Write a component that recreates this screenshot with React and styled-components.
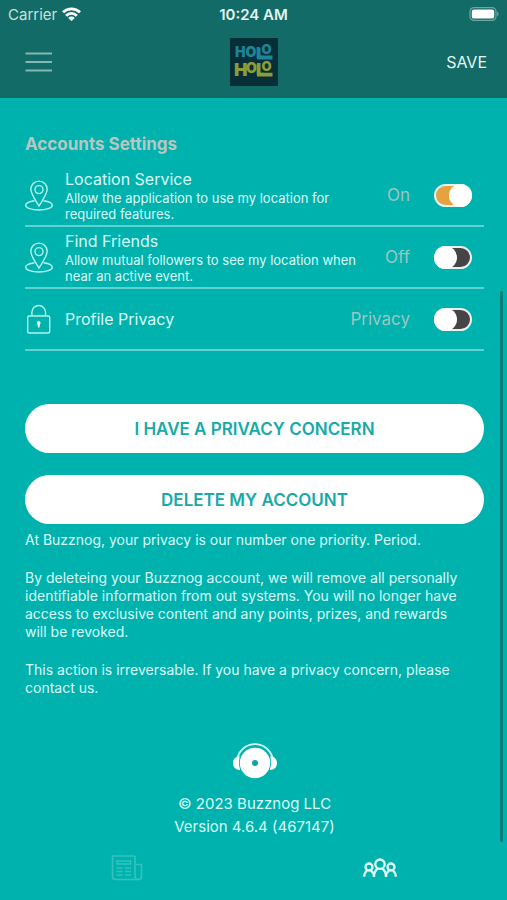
import React, { useState } from 'react'
import styled, { createGlobalStyle } from 'styled-components'

const GlobalStyle = createGlobalStyle`
  * {
    box-sizing: border-box;
  }
  body {
    margin: 0;
    background: #00b2ae;
    font-family: Inter, "Liberation Sans", sans-serif;
    color: #d9fbf8;
  }
  button {
    font-family: inherit;
    border: none;
    padding: 0;
    cursor: pointer;
  }
`

const Screen = styled.div`
  min-height: 100vh;
  display: flex;
  flex-direction: column;
`

const Header = styled.header`
  background: #136b67;
  color: #e0f2f1;
`

const StatusBar = styled.div`
  height: 28px;
  padding: 0 8px;
  display: grid;
  grid-template-columns: 1fr auto 1fr;
  align-items: center;
  font-size: 15px;
`

const Carrier = styled.div`
  display: flex;
  align-items: center;
  gap: 5px;
  color: #c9e0de;
`

const Clock = styled.time`
  font-weight: 600;
`

const BatteryLevel = styled.span`
  display: flex;
  justify-self: end;
`

const NavBar = styled.nav`
  height: 70px;
  padding: 0 20px 2px;
  display: grid;
  grid-template-columns: 1fr auto 1fr;
  align-items: center;
`

const NavButton = styled.button`
  display: flex;
  justify-self: ${(props) => props.$side};
  background: none;
  color: #e6f5f4;
  font-size: 16px;
  line-height: 20px;
`

const Logo = styled.svg`
  display: block;
  width: 48px;
  height: 48px;
  font-family: Inter, "Liberation Sans", sans-serif;
  font-weight: 900;
`

const Main = styled.main`
  position: relative;
  flex: 1;
  padding: 34px 23px 0 25px;
`

const ScrollThumb = styled.div`
  position: absolute;
  top: 26%;
  right: 4px;
  bottom: 0;
  width: 3px;
  border-radius: 2px;
  background: #067f7c;
`

const SectionTitle = styled.h2`
  margin: 0 0 9px;
  font-size: 17px;
  line-height: 24px;
  font-weight: 700;
  color: #b9c6c2;
`

const List = styled.ul`
  list-style: none;
  margin: 0;
  padding: 0;
`

const Row = styled.li`
  min-height: 62px;
  padding-right: 12px;
  display: flex;
  align-items: center;
  border-bottom: 2px solid #5fd2cf;

  > svg {
    flex: none;
    margin-right: 11px;
  }
`

const RowText = styled.label`
  flex: 1;
  display: block;
`

const RowTitle = styled.span`
  display: block;
  font-size: 16px;
  line-height: 22px;
`

const RowDescription = styled.span`
  display: block;
  font-size: 13px;
  line-height: 16px;
`

const RowState = styled.span`
  margin: 0 24px 0 16px;
  font-size: 17px;
  line-height: 22px;
  color: #9cc6c1;
`

const Switch = styled.input`
  appearance: none;
  flex: none;
  width: 38px;
  height: 23px;
  margin: 0;
  display: flex;
  align-items: stretch;
  border: 2px solid #e4f3f0;
  border-radius: 12px;
  background: #474448;
  cursor: pointer;

  &::before {
    content: '';
    width: 23px;
    margin: -2px;
    border-radius: 50%;
    background: #ffffff;
  }

  &:checked {
    justify-content: flex-end;
    background: #e6a23f;
  }
`

const Actions = styled.div`
  margin-top: 53px;
  display: grid;
  gap: 22px;
`

const ActionButton = styled.button`
  height: 49px;
  border-radius: 25px;
  background: #ffffff;
  color: #17aaa7;
  font-size: 17px;
  font-weight: 600;
`

const Notice = styled.div`
  margin-top: 7px;
  padding-right: 16px;
  display: grid;
  gap: 20px;
  font-size: 14px;
  line-height: 18px;

  p {
    margin: 0;
  }
`

const About = styled.footer`
  margin-top: 46px;
  display: flex;
  flex-direction: column;
  align-items: center;
  font-size: 15px;
  line-height: 23px;

  svg {
    margin-bottom: 13px;
  }
`

const TabBar = styled.nav`
  height: 58px;
  display: grid;
  grid-template-columns: 1fr 1fr;
`

const Tab = styled.a`
  display: flex;
  align-items: center;
  justify-content: center;
  padding-bottom: 6px;
  color: ${(props) => (props.$active ? '#e2fffc' : '#35c2be')};
`

const WifiIcon = () => (
  <svg width="19" height="14" viewBox="0 0 19 14" fill="none" stroke="#ffffff" strokeWidth="2.8" aria-hidden="true">
    <path d="M1 5.3a12.2 12.2 0 0 1 17 0" />
    <path d="M4.1 8.7a7.6 7.6 0 0 1 10.8 0" />
    <path d="M9.5 14 6.2 10.9a4.6 4.6 0 0 1 6.6 0z" fill="#ffffff" stroke="none" />
  </svg>
)

const BatteryIcon = () => (
  <svg width="30" height="14" viewBox="0 0 30 14" aria-hidden="true">
    <rect x="1" y="0.6" width="26" height="12.8" rx="4" fill="none" stroke="#6fa5a2" strokeWidth="1.2" />
    <rect x="2.8" y="2.4" width="22.4" height="9.2" rx="2.2" fill="#ffffff" />
    <path d="M28.2 4.8c1.8.6 1.8 3.8 0 4.4z" fill="#6fa5a2" />
  </svg>
)

const MenuIcon = () => (
  <svg width="32" height="22" viewBox="0 0 32 22" stroke="#82b8b5" strokeWidth="2" aria-hidden="true">
    <path d="M5.5 2.5h26.5M5.5 11h26.5M5.5 19.5h26.5" />
  </svg>
)

const HoloLogo = () => (
  <Logo viewBox="0 0 48 48" role="img" aria-label="Holo Holo">
    <rect width="48" height="48" fill="#082e38" />
    <g fill="#1c8696">
      <text y="19" fontSize="14">
        <tspan x="5">H</tspan>
        <tspan x="15.5">O</tspan>
        <tspan x="26" y="20">L</tspan>
        <tspan x="31.5" y="15.5" fontSize="13">O</tspan>
      </text>
      <path d="M27 17.5h15.5v4H27zM27 9.5h3.5v11H27z" />
    </g>
    <g fill="#8b9c3b">
      <text y="38" fontSize="18">
        <tspan x="4">H</tspan>
        <tspan x="16" y="34.5" fontSize="14">O</tspan>
        <tspan x="26" y="37" fontSize="14">L</tspan>
        <tspan x="31.5" y="33" fontSize="13">O</tspan>
      </text>
      <path d="M27 34.7h15.5v3.8H27zM27 25h3.5v13H27z" />
    </g>
  </Logo>
)

const PinIcon = () => (
  <svg width="29" height="31" viewBox="0 0 29 31" fill="none" stroke="#b5f4ef" strokeWidth="1.4" aria-hidden="true">
    <path d="M14 26C10.5 20 5.8 14 5.8 9.3a8.2 8.2 0 0 1 16.4 0C22.2 14 17.5 20 14 26z" />
    <circle cx="14" cy="9.6" r="4" />
    <path d="M9.5 20.8c-5.4.8-8.8 2.4-8.8 4.5 0 2.6 5.9 4.7 13.3 4.7s13.3-2.1 13.3-4.7c0-2.1-3.4-3.7-8.8-4.5" />
  </svg>
)

const LockIcon = () => (
  <svg width="29" height="30" viewBox="0 0 29 30" fill="none" stroke="#b5f4ef" strokeWidth="1.4" aria-hidden="true">
    <rect x="2.7" y="12" width="22" height="17" rx="1.5" />
    <path d="M6.9 12V8.3a6.8 6.8 0 0 1 13.6 0V12" />
    <path d="M13.7 17a2 2 0 0 1 1.2 3.5l-.5 3h-1.4l-.5-3a2 2 0 0 1 1.2-3.5z" fill="#e8fffc" stroke="none" />
  </svg>
)

const BuzzIcon = () => (
  <svg width="44" height="36" viewBox="0 0 44 36" aria-hidden="true">
    <path d="M4.5 15a18 18 0 0 1 35 0" fill="none" stroke="#c9f8f5" strokeWidth="1.8" />
    <path d="M6.5 13.2C3 13 0 16 0 20s2.5 6.8 7 7zM37.5 13.2C41 13 44 16 44 20s-2.5 6.8-7 7z" fill="#ffffff" />
    <circle cx="22" cy="20" r="16" fill="#00b2ae" />
    <circle cx="22" cy="20" r="15.2" fill="#ffffff" />
    <circle cx="22" cy="20" r="3" fill="#10a5a2" />
  </svg>
)

const NewsIcon = () => (
  <svg width="32" height="26" viewBox="0 0 32 26" fill="none" stroke="currentColor" strokeWidth="1.6" aria-hidden="true">
    <path d="M24 1H1.5v20.5a3 3 0 0 0 3 3h23.3a2.7 2.7 0 0 0 2.7-2.7V9.5H24" />
    <path d="M24 1v20.5a3 3 0 0 0 3 3" />
    <path d="M6 6h13.5v3H6zM5.5 13h6M14 13h6M5.5 16.5h6M14 16.5h6M5.5 20h6M14 20h6" />
  </svg>
)

const FriendsIcon = () => (
  <svg width="36" height="20" viewBox="0 0 36 20" fill="none" stroke="currentColor" strokeWidth="2.3" aria-hidden="true">
    <circle cx="18" cy="6.2" r="4.7" />
    <path d="M12 18.8c0-4 1.4-6.5 3.7-8.3M24 18.8c0-4-1.4-6.5-3.7-8.3" />
    <circle cx="7" cy="9" r="3.5" />
    <path d="M2.2 18.8c0-3 1-5 3-6.5M12 18.8c0-3-1.2-5-3.2-6.5" />
    <circle cx="29" cy="9" r="3.5" />
    <path d="M33.8 18.8c0-3-1-5-3-6.5M24 18.8c0-3 1.2-5 3.2-6.5" />
  </svg>
)

function SettingRow({ id, icon, title, description, state, checked, onChange }) {
  return (
    <Row>
      {icon}
      <RowText htmlFor={id}>
        <RowTitle>{title}</RowTitle>
        {description && <RowDescription>{description}</RowDescription>}
      </RowText>
      <RowState>{state}</RowState>
      <Switch id={id} type="checkbox" role="switch" checked={checked} onChange={onChange} />
    </Row>
  )
}

function App() {
  const [settings, setSettings] = useState({ location: true, friends: false, privacy: false })

  const toggle = (name) => () => {
    setSettings({ ...settings, [name]: !settings[name] })
  }

  return (
    <Screen>
      <GlobalStyle />
      <Header>
        <StatusBar>
          <Carrier>
            Carrier
            <WifiIcon />
          </Carrier>
          <Clock>10:24 AM</Clock>
          <BatteryLevel>
            <BatteryIcon />
          </BatteryLevel>
        </StatusBar>
        <NavBar>
          <NavButton type="button" $side="start" aria-label="Menu">
            <MenuIcon />
          </NavButton>
          <HoloLogo />
          <NavButton type="button" $side="end">SAVE</NavButton>
        </NavBar>
      </Header>

      <Main>
        <SectionTitle>Accounts Settings</SectionTitle>
        <List>
          <SettingRow
            id="location"
            icon={<PinIcon />}
            title="Location Service"
            description="Allow the application to use my location for required features."
            state={settings.location ? 'On' : 'Off'}
            checked={settings.location}
            onChange={toggle('location')}
          />
          <SettingRow
            id="friends"
            icon={<PinIcon />}
            title="Find Friends"
            description="Allow mutual followers to see my location when near an active event."
            state={settings.friends ? 'On' : 'Off'}
            checked={settings.friends}
            onChange={toggle('friends')}
          />
          <SettingRow
            id="privacy"
            icon={<LockIcon />}
            title="Profile Privacy"
            state="Privacy"
            checked={settings.privacy}
            onChange={toggle('privacy')}
          />
        </List>

        <Actions>
          <ActionButton type="button">I HAVE A PRIVACY CONCERN</ActionButton>
          <ActionButton type="button">DELETE MY ACCOUNT</ActionButton>
        </Actions>

        <Notice>
          <p>At Buzznog, your privacy is our number one priority. Period.</p>
          <p>
            By deleteing your Buzznog account, we will remove all personally identifiable
            information from out systems. You will no longer have access to exclusive content
            and any points, prizes, and rewards will be revoked.
          </p>
          <p>
            This action is irreversable. If you have a privacy concern, please contact us.
          </p>
        </Notice>

        <About>
          <BuzzIcon />
          <span>© 2023 Buzznog LLC</span>
          <span>Version 4.6.4 (467147)</span>
        </About>
        <ScrollThumb />
      </Main>

      <TabBar>
        <Tab href="#news" aria-label="News">
          <NewsIcon />
        </Tab>
        <Tab href="#friends" aria-label="Friends" $active>
          <FriendsIcon />
        </Tab>
      </TabBar>
    </Screen>
  )
}

export default App
